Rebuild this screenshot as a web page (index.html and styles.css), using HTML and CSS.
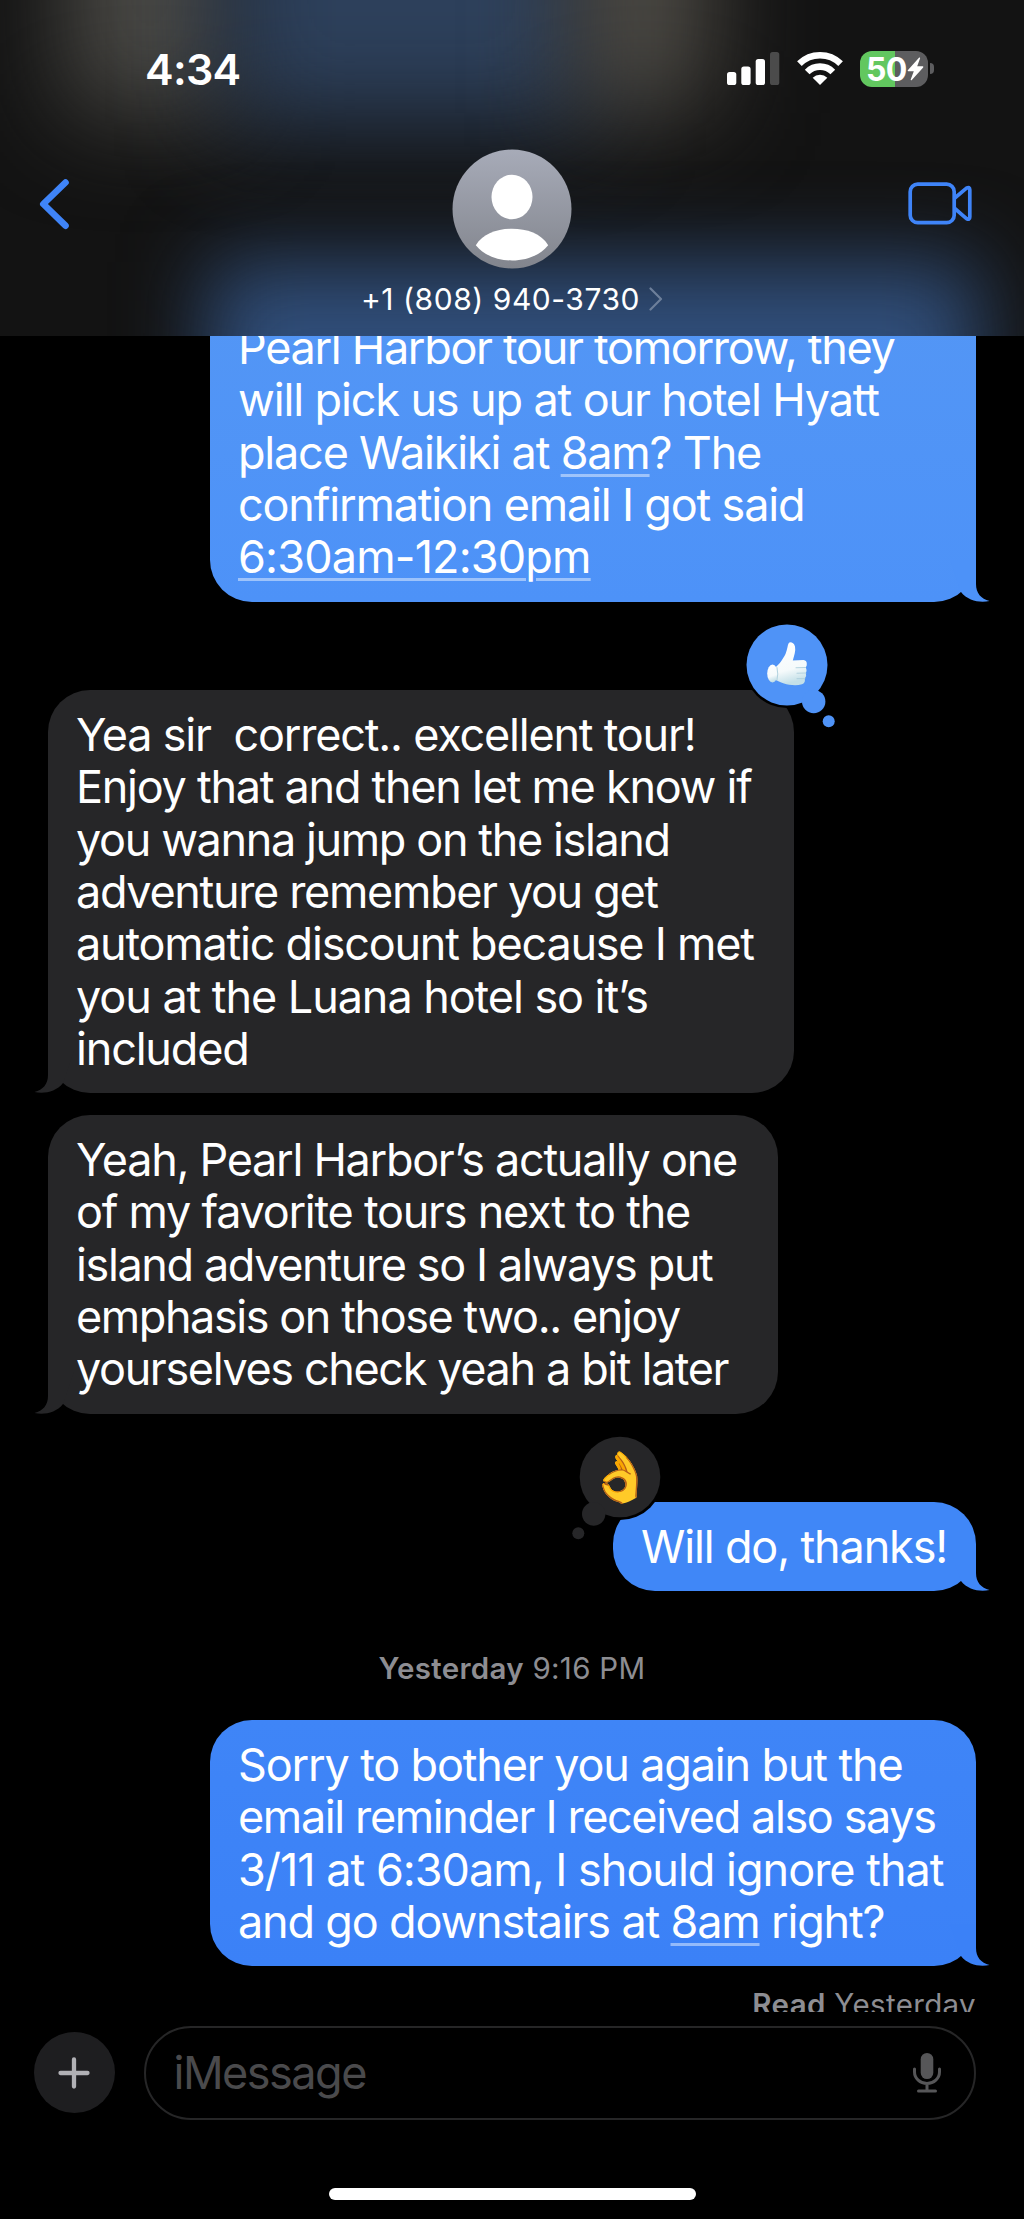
FILE: index.html
```html
<!DOCTYPE html>
<html lang="en">
<head>
<meta charset="utf-8">
<title>Messages</title>
<link rel="stylesheet" href="styles.css">
</head>
<body>
<div class="phone">
  <header class="header">
    <div class="glow" aria-hidden="true">
      <i class="blob blob-left"></i><i class="blob blob-top"></i><i class="blob blob-right"></i><i class="blob blob-bottom"></i>
    </div>
    <div class="status">
      <span class="time">4:34</span>
      <div class="status-icons">
        <svg width="53" height="36" viewBox="0 0 53 36"><g fill="#fff"><rect x="0" y="21" width="9.3" height="13" rx="2.6"/><rect x="14.3" y="15.5" width="9.3" height="18.5" rx="2.6"/><rect x="28.7" y="8" width="9.3" height="26" rx="2.6"/></g><rect x="43" y="1" width="9.3" height="33" rx="2.6" fill="#4b4b4b"/></svg>
        <svg class="wifi" width="46" height="36" viewBox="0 0 46 36"><g fill="none" stroke="#fff" stroke-width="6.6"><path d="M2.4 12.7A29.5 29.5 0 0 1 43.6 12.7"/><path d="M10.2 21A18 18 0 0 1 35.8 21"/></g><path d="M23 34L15.7 26.7a10.4 10.4 0 0 1 14.6 0Z" fill="#fff"/></svg>
        <div class="battery"><span>50</span><svg width="17" height="24" viewBox="0 0 17 24"><path d="M12.2.6L.8 13.2q-.6 1 .6 1.1h5.4L3.7 22.6q-.1 1 .9.6L16.2 10.4q.5-1-.6-1.1h-5.4L13.1 1.3q0-1-.9-.7Z" fill="#fff"/></svg></div>
        <i class="battery-cap"></i>
      </div>
    </div>
    <div class="nav">
      <svg class="back" width="32" height="54" viewBox="0 0 32 54"><path d="M26.5 5.5L4.3 27L26.5 48.7" fill="none" stroke="#3f84f8" stroke-width="6.6" stroke-linecap="round" stroke-linejoin="round"/></svg>
      <div class="contact">
        <svg class="avatar" width="120" height="120" viewBox="0 0 120 120"><defs><linearGradient id="av" x1="0" y1="0" x2="0" y2="1"><stop offset="0" stop-color="#a7abb8"/><stop offset="1" stop-color="#82858d"/></linearGradient></defs><circle cx="60" cy="60" r="59.5" fill="url(#av)"/><ellipse cx="60" cy="48" rx="20.5" ry="22.3" fill="#fff"/><path d="M23.8 96.2C31 84.5 45 79.8 60 79.8S89 84.5 96.2 96.2C88 106.5 74 111.5 60 111.5S32 106.5 23.8 96.2Z" fill="#fff"/></svg>
        <div class="number"><span>+1 (808) 940-3730</span><svg width="14" height="24" viewBox="0 0 14 24"><path d="M1.5 1.5L12 12L1.5 22.5" fill="none" stroke="#6d7f9a" stroke-width="2.2" stroke-linecap="round" stroke-linejoin="round"/></svg></div>
      </div>
      <svg class="video" width="66" height="44" viewBox="0 0 66 44"><g fill="none" stroke="#3f84f8" stroke-width="3.7" stroke-linejoin="round"><rect x="2.2" y="2.2" width="44" height="38.5" rx="7.5"/><path d="M46.2 16.5L58.5 6.2Q61.8 4.3 61.8 7.8V35Q61.8 38.5 58.5 36.6L46.2 26"/></g></svg>
    </div>
  </header>

  <main class="thread">
    <div class="bubble out tone-a wide first">
      <p class="t131">Pearl Harbor tour tomorrow, they</p>
      <p class="t113">will pick us up at our hotel Hyatt</p>
      <p class="t120">place Waikiki at <a>8am</a>? The</p>
      <p class="t118">confirmation email I got said</p>
      <p class="t083"><a>6:30am-12:30pm</a></p>
      <svg class="tail" width="40" height="42" viewBox="0 0 40 42"><path d="M26 0V24C26 33 31 39 39.5 41C30 43 18 41 11 32L0 0Z"/></svg>
    </div>

    <div class="bubble in size-a gap-reaction">
      <p class="t122">Yea sir&nbsp; correct.. excellent tour!</p>
      <p class="t127">Enjoy that and then let me know if</p>
      <p class="t138">you wanna jump on the island</p>
      <p class="t135">adventure remember you get</p>
      <p class="t122">automatic discount because I met</p>
      <p class="t107">you at the Luana hotel so it’s</p>
      <p class="t118">included</p>
      <svg class="tail" width="40" height="42" viewBox="0 0 40 42"><path d="M26 0V24C26 33 31 39 39.5 41C30 43 18 41 11 32L0 0Z"/></svg>
      <svg class="tapback tapback-right" width="100" height="110" viewBox="0 0 100 110">
        <circle cx="44" cy="44" r="43" fill="#000"/>
        <g fill="#4f93f7"><circle cx="44" cy="44" r="40.5"/><circle cx="70.7" cy="80.6" r="11.7"/><circle cx="85.7" cy="100.3" r="6"/></g>
        <defs><linearGradient id="glove" x1="0" y1="0" x2="0.2" y2="1"><stop offset="0" stop-color="#fff"/><stop offset=".7" stop-color="#f5fafb"/><stop offset="1" stop-color="#c4e0e8"/></linearGradient></defs>
        <path d="M32 46.5C36 44 40 38 42.5 33C44.5 28 44.5 24 45.8 22C47 20.5 51 21.5 52 25.5C53 30 51 35 49.8 39.5L60.5 39Q64 39.5 63.8 43Q64 45.5 62.5 46.5Q64.5 49 62.8 52Q64 55 61.8 57.5Q62.5 62 59 63.3C53 65 46 64 41 62.5C37 61 34.5 60 32 58.5Z" fill="url(#glove)"/>
        <ellipse cx="29.5" cy="52.5" rx="5.3" ry="9" fill="url(#glove)"/>
        <path d="M34 46.5Q35.5 53 34 59M53 46.8L62.5 46.5M54 52.3L62.8 52M54 57.6L61.8 57.5" fill="none" stroke="#b4d3df" stroke-width="1.1" stroke-linecap="round"/>
      </svg>
    </div>

    <div class="bubble in size-b gap-same">
      <p class="t129">Yeah, Pearl Harbor’s actually one</p>
      <p class="t125">of my favorite tours next to the</p>
      <p class="t138">island adventure so I always put</p>
      <p class="t143">emphasis on those two.. enjoy</p>
      <p class="t138">yourselves check yeah a bit later</p>
      <svg class="tail" width="40" height="42" viewBox="0 0 40 42"><path d="M26 0V24C26 33 31 39 39.5 41C30 43 18 41 11 32L0 0Z"/></svg>
    </div>

    <div class="bubble out tone-b short gap-reaction">
      <p class="t115">Will do, thanks!</p>
      <svg class="tail" width="40" height="42" viewBox="0 0 40 42"><path d="M26 0V24C26 33 31 39 39.5 41C30 43 18 41 11 32L0 0Z"/></svg>
      <svg class="tapback tapback-left" width="100" height="110" viewBox="0 0 100 110">
        <circle cx="56" cy="44" r="43" fill="#000"/>
        <g fill="#262628"><circle cx="56" cy="44" r="40.3"/><circle cx="29.7" cy="81" r="11.7"/><circle cx="14.3" cy="100.2" r="6"/></g>
        <text transform="translate(56 60.5) scale(1.13 1)" text-anchor="middle" font-size="49">👌</text>
      </svg>
    </div>

    <p class="stamp"><b>Yesterday</b> 9:16 PM</p>

    <div class="bubble out tone-c wide">
      <p class="t116">Sorry to bother you again but the</p>
      <p class="t138">email reminder I received also says</p>
      <p class="t100">3/11 at 6:30am, I should ignore that</p>
      <p class="t118">and go downstairs at <a>8am</a> right?</p>
      <svg class="tail" width="40" height="42" viewBox="0 0 40 42"><path d="M26 0V24C26 33 31 39 39.5 41C30 43 18 41 11 32L0 0Z"/></svg>
    </div>
    <p class="receipt"><b>Read</b> Yesterday</p>
  </main>

  <footer class="composer">
    <div class="plus"><svg width="34" height="34" viewBox="0 0 34 34"><path d="M17 3.5V30.5M3.5 17H30.5" stroke="#b1b1b5" stroke-width="4.3" stroke-linecap="round"/></svg></div>
    <div class="field">
      <span>iMessage</span>
      <svg width="28" height="42" viewBox="0 0 28 42"><rect x="7.7" y="1" width="12.6" height="26" rx="6.3" fill="#565658"/><path d="M1.5 17V20A12.5 11.5 0 0 0 26.5 20V17M14 31.5V38.5M5.5 39H22.5" fill="none" stroke="#565658" stroke-width="3" stroke-linecap="round"/></svg>
    </div>
  </footer>
  <div class="home"></div>
</div>
</body>
</html>
```
FILE: styles.css
```css
* { box-sizing: border-box; }

body {
  margin: 0;
  background: #000;
  color: #fff;
  font-family: Inter, "Liberation Sans", sans-serif;
}

p { margin: 0; }
svg { display: block; flex: none; }

.phone {
  display: flex;
  flex-direction: column;
  width: 1024px;
  height: 2219px;
  overflow: hidden;
  background: #000;
}

/* header */
.header {
  position: relative;
  flex: none;
  height: 336px;
  overflow: hidden;
  background: #131313;
}

.glow { position: absolute; inset: 0; }
.blob { position: absolute; filter: blur(50px); }
.blob-left { left: 65px; top: -220px; width: 170px; height: 333px; background: #4a4945; }
.blob-top { left: 225px; top: -220px; width: 370px; height: 343px; background: #2d405b; }
.blob-right { left: 575px; top: -220px; width: 135px; height: 333px; background: #4e4b45; }
.blob-bottom { left: 208px; top: 262px; width: 770px; height: 260px; background: #304e7a; filter: blur(42px); }

.status {
  position: relative;
  display: flex;
  justify-content: space-between;
  height: 149px;
  padding: 51px 90px 0 145px;
}

.time {
  font-size: 43px;
  font-weight: 600;
  line-height: 36px;
  letter-spacing: -0.7px;
}

.status-icons { display: flex; }
.wifi { margin-left: 17px; }

.battery {
  display: flex;
  align-items: center;
  width: 68px;
  height: 36px;
  margin-left: 17px;
  padding-left: 6px;
  border-radius: 12px;
  background: linear-gradient(90deg, #62c75f 35px, #5d5d5f 35px);
  font-size: 32px;
  font-weight: 700;
  letter-spacing: -0.6px;
}

.battery-cap {
  width: 4px;
  height: 11px;
  margin: 12px 0 0 2px;
  border-radius: 0 5px 5px 0;
  background: #5d5d5f;
}

.nav {
  position: relative;
  display: grid;
  grid-template-columns: 1fr 310px 1fr;
  padding: 0 50px 0 39px;
}

.back { margin-top: 28px; }
.video { margin-top: 33px; justify-self: end; }

.contact {
  display: flex;
  flex-direction: column;
  align-items: center;
  position: relative;
  margin: 0 -5.5px 0 5.5px;
}

.number {
  display: flex;
  align-items: center;
  gap: 9px;
  margin-top: 12px;
  font-size: 30px;
  line-height: 36px;
  letter-spacing: 0.55px;
  white-space: nowrap;
}

/* conversation */
.thread {
  display: flex;
  flex-direction: column;
  flex: none;
  height: 1676px;
  padding: 0 48px;
  overflow: hidden;
}

.bubble {
  position: relative;
  flex: none;
  padding: 19px 0 18px 28px;
  border-radius: 42px;
  font-size: 45px;
  line-height: 52.33px;
  white-space: nowrap;
}

.out { align-self: flex-end; background: var(--tone-bg); }
.in { align-self: flex-start; background: #262628; color: #fff; }
.in .tail { fill: #262628; }
.out .tail { fill: var(--tone); }

.tone-a { --tone: #4d92f8; --tone-bg: linear-gradient(#5396f5, #4d92f8); }
.tone-b { --tone: #4087f7; --tone-bg: #4087f7; }
.tone-c { --tone: #3b81f7; --tone-bg: linear-gradient(#3f85f7, #3b81f7); }

.wide { width: 766px; }
.short { width: 363px; }
.size-a { width: 746px; }
.size-b { width: 730px; }

.first { margin-top: -33px; border-top-left-radius: 0; border-top-right-radius: 0; }
.gap-reaction { margin-top: 88.5px; }
.gap-same { margin-top: 21.5px; }

.tail { position: absolute; right: -14px; bottom: 0; }
.in .tail { right: auto; left: -14px; transform: scaleX(-1); }

.tapback { position: absolute; top: -69px; }
.tapback-right { right: -49px; }
.tapback-left { left: -49px; }

.bubble a {
  text-decoration: underline;
  text-decoration-color: rgba(255, 255, 255, 0.45);
  text-decoration-thickness: 3px;
  text-underline-offset: 5px;
}

/* per-line tracking */
.t083 { letter-spacing: -0.83px; }
.t100 { letter-spacing: -1px; }
.t107 { letter-spacing: -1.07px; }
.t113 { letter-spacing: -1.13px; }
.t115 { letter-spacing: -1.15px; }
.t116 { letter-spacing: -1.16px; }
.t118 { letter-spacing: -1.18px; }
.t120 { letter-spacing: -1.2px; }
.t122 { letter-spacing: -1.22px; }
.t125 { letter-spacing: -1.25px; }
.t127 { letter-spacing: -1.27px; }
.t129 { letter-spacing: -1.29px; }
.t131 { letter-spacing: -1.31px; }
.t135 { letter-spacing: -1.35px; }
.t138 { letter-spacing: -1.38px; }
.t143 { letter-spacing: -1.43px; }

.stamp,
.receipt {
  flex: none;
  color: #8d8d92;
  font-size: 29.5px;
  line-height: 36px;
}

.stamp b,
.receipt b { font-weight: 600; }

.stamp {
  height: 128.5px;
  padding-top: 59px;
  text-align: center;
  letter-spacing: 0.3px;
}

.receipt {
  padding-top: 20px;
  text-align: right;
  letter-spacing: 0.35px;
}

/* composer */
.composer {
  display: flex;
  flex: none;
  align-items: center;
  gap: 29px;
  height: 94px;
  margin-top: 13.5px;
  padding: 0 48px 0 33.5px;
}

.plus {
  display: grid;
  place-items: center;
  width: 81px;
  height: 81px;
  border-radius: 50%;
  background: #1e1e20;
}

.field {
  display: flex;
  flex: 1;
  align-items: center;
  justify-content: space-between;
  height: 94px;
  padding: 0 33.5px 0 28px;
  border: 2.5px solid #262627;
  border-radius: 47px;
  color: #4a4a4c;
  font-size: 45px;
  letter-spacing: -1.5px;
}

.home {
  align-self: center;
  flex: none;
  width: 367px;
  height: 12px;
  margin-top: 68.5px;
  border-radius: 6px;
  background: #fff;
}
```
